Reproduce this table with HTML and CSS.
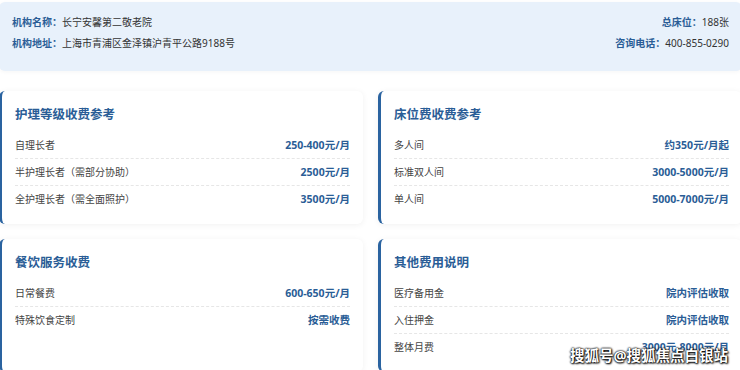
FILE: index.html
```html
<!DOCTYPE html>
<html lang="zh-CN">
<head>
  <meta charset="UTF-8" />
  <meta name="viewport" content="width=device-width, initial-scale=1.0"/>
  <title>长宁安馨第二敬老院 收费参考</title>
  <link rel="stylesheet" href="styles.css">
</head>

<body>

<div class="page">
  <div class="info">
    <div class="info-col">
      <p><span class="label">机构名称：</span>长宁安馨第二敬老院</p>
      <p><span class="label">机构地址：</span>上海市青浦区金泽镇沪青平公路9188号</p>
    </div>
    <div class="info-col right">
      <p><span class="label">总床位：</span>188张</p>
      <p><span class="label">咨询电话：</span>400-855-0290</p>
    </div>
  </div>

  <div class="cards">
    <div class="card">
      <h3>护理等级收费参考</h3>
      <div class="row"><span>自理长者</span><b>250-400元/月</b></div>
      <div class="row"><span>半护理长者（需部分协助）</span><b>2500元/月</b></div>
      <div class="row"><span>全护理长者（需全面照护）</span><b>3500元/月</b></div>
    </div>

    <div class="card">
      <h3>床位费收费参考</h3>
      <div class="row"><span>多人间</span><b>约350元/月起</b></div>
      <div class="row"><span>标准双人间</span><b>3000-5000元/月</b></div>
      <div class="row"><span>单人间</span><b>5000-7000元/月</b></div>
    </div>

    <div class="card">
      <h3>餐饮服务收费</h3>
      <div class="row"><span>日常餐费</span><b>600-650元/月</b></div>
      <div class="row"><span>特殊饮食定制</span><b>按需收费</b></div>
    </div>

    <div class="card">
      <h3>其他费用说明</h3>
      <div class="row"><span>医疗备用金</span><b>院内评估收取</b></div>
      <div class="row"><span>入住押金</span><b>院内评估收取</b></div>
      <div class="row"><span>整体月费</span><b>3000元-8000元/月</b></div>
    </div>
  </div>
</div>

<div class="watermark">搜狐号@搜狐焦点白银站</div>

</body>
</html>
```

FILE: styles.css
```css
* {
  box-sizing: border-box;
  font-family: "Noto Sans", "Noto Sans CJK SC", sans-serif;
}

html, body {
  overflow: hidden;
}

body {
  margin: 0;
  background: #fff;
  height: 370px;
}

.page {
  width: 743px;
  margin: 2px 0 0 -1px;
}

.info {
  display: flex;
  justify-content: space-between;
  background: #e8f1fb;
  border-radius: 6px;
  padding: 10px 13px 17px 13px;
  box-shadow: 0 1px 4px rgba(0, 0, 0, 0.04);
}

.info p {
  margin: 0;
  font-size: 10px;
  line-height: 21px;
  color: #333;
}

.info .right {
  text-align: right;
}

.label {
  font-weight: bold;
  color: #2a5d96;
}

.cards {
  display: grid;
  grid-template-columns: 1fr 1fr;
  gap: 15px;
  margin-top: 20px;
}

.card {
  background: #fff;
  border-left: 3px solid #2a63a0;
  border-radius: 6px;
  padding: 15px 13px 12px 13px;
  box-shadow: 0 1px 6px rgba(0, 0, 0, 0.06);
}

.card h3 {
  margin: 0 0 8px;
  font-size: 12.5px;
  line-height: 18px;
  color: #2a5d96;
}

.row {
  display: flex;
  justify-content: space-between;
  align-items: center;
  padding: 6px 0;
  line-height: 14px;
  border-bottom: 1px dashed #e6e6e6;
}

.row:last-child {
  border-bottom: none;
}

.row span {
  font-size: 10px;
  color: #444;
}

.row b {
  font-size: 10.5px;
  color: #2a5d96;
}

.watermark {
  position: absolute;
  right: 12px;
  bottom: 5px;
  font-size: 14.5px;
  font-weight: bold;
  color: #fff;
  text-shadow: 0 0 2px #000, 0 0 2px #000, 1px 1px 2px #000;
}
```
